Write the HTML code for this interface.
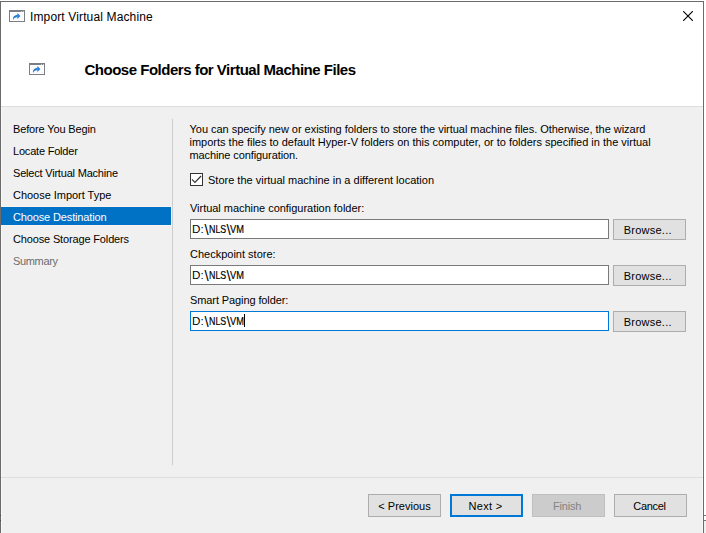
<!DOCTYPE html>
<html>
<head>
<meta charset="utf-8">
<title>Import Virtual Machine</title>
<style>
html,body{margin:0;padding:0;}
body{width:706px;height:533px;overflow:hidden;background:#fff;position:relative;font-family:"Liberation Sans",sans-serif;font-size:11px;color:#000;}
.abs{position:absolute;}
#bg{position:absolute;left:1px;top:107px;width:702px;height:440px;background:#f0f0f0;}
#bt{position:absolute;left:0;top:1px;width:704px;height:1px;background:#6b6b6b;}
#bl{position:absolute;left:0;top:1px;width:1px;height:540px;background:#6b6b6b;}
#br{position:absolute;left:703px;top:1px;width:1px;height:540px;background:#6b6b6b;}
#headline{position:absolute;left:1px;top:106px;width:702px;height:1px;background:#dfdcdf;}
.t{position:absolute;white-space:nowrap;line-height:13px;height:13px;}
#title{left:30px;top:9px;font-size:12px;line-height:16px;height:16px;letter-spacing:0.135px;}
#h1{left:84.5px;top:61px;font-size:15px;font-weight:bold;line-height:18px;height:18px;letter-spacing:-0.49px;}
.nav{left:13px;letter-spacing:-0.2px;}
#sel{position:absolute;left:1px;top:207px;width:170px;height:18px;background:#0072c6;}
#vsep{position:absolute;left:172px;top:119px;width:1px;height:346px;background:#cdcdcd;}
.tb{position:absolute;left:190px;width:417px;height:18px;border:1px solid #7a7a7a;background:#fff;}
.tb span{position:absolute;top:3px;line-height:13px;white-space:nowrap;transform-origin:0 50%;}
.tb span.bs{font-size:15px;top:3px;}
.btn{position:absolute;height:19px;width:71px;border:1px solid #adadad;background:#e1e1e1;text-align:center;line-height:21px;white-space:nowrap;}
.br{letter-spacing:0.25px;text-indent:-3.5px;}
.btn.big{height:21px;line-height:23px;}
#hsep{position:absolute;left:1px;top:477px;width:702px;height:1px;background:#dfdcdf;}
.ico{position:absolute;width:16px;height:12px;}
</style>
</head>
<body>
<div id="bg"></div>
<div id="headline"></div>
<div class="abs" style="left:1px;top:107px;width:1px;height:440px;background:#f8f8f8"></div><div class="abs" style="left:702px;top:107px;width:1px;height:440px;background:#f8f8f8"></div>
<div id="bt"></div><div id="bl"></div><div id="br"></div>
<div class="abs" style="left:0;top:515px;width:1px;height:1px;background:#444"></div><div class="abs" style="left:0;top:520px;width:1px;height:1px;background:#444"></div>
<div class="abs" style="left:704px;top:515px;width:2px;height:1px;background:#777"></div>
<div class="abs" style="left:704px;top:520px;width:2px;height:1px;background:#777"></div>
<div class="abs" style="left:704px;top:521px;width:2px;height:12px;background:#f0f0f0"></div>

<svg class="ico" style="left:9px;top:10px" viewBox="0 0 16 12"><rect x="0.5" y="0.5" width="15" height="11" fill="#fff" stroke="#7b7f83"/><rect x="0" y="0" width="16" height="2" fill="#7b7f83"/><rect x="2" y="3" width="12" height="7" fill="#fafafa"/><rect x="12" y="1" width="1" height="1" fill="#c9ccd0"/><rect x="14" y="1" width="1" height="1" fill="#c9ccd0"/><path d="M8.4 3.1 L11.3 6.05 L8.4 9 V7.35 C7.2 7.3 6.0 7.55 5.4 8 C4.95 8.4 4.7 9.1 4.5 9.9 C3.6 8.5 4.2 7 5.37 6.0 C6.2 5.3 7.2 4.9 8.4 4.8 Z" fill="#1d74cc"/><path d="M8.7 4.9 L10.2 6.05 L8.7 7.2 L7.2 6.3 Z" fill="#3b97ea"/></svg>
<svg class="ico" style="left:29px;top:63px" viewBox="0 0 16 12"><rect x="0.5" y="0.5" width="15" height="11" fill="#fff" stroke="#7b7f83"/><rect x="0" y="0" width="16" height="2" fill="#7b7f83"/><rect x="2" y="3" width="12" height="7" fill="#fafafa"/><rect x="12" y="1" width="1" height="1" fill="#c9ccd0"/><rect x="14" y="1" width="1" height="1" fill="#c9ccd0"/><path d="M8.4 3.1 L11.3 6.05 L8.4 9 V7.35 C7.2 7.3 6.0 7.55 5.4 8 C4.95 8.4 4.7 9.1 4.5 9.9 C3.6 8.5 4.2 7 5.37 6.0 C6.2 5.3 7.2 4.9 8.4 4.8 Z" fill="#1d74cc"/><path d="M8.7 4.9 L10.2 6.05 L8.7 7.2 L7.2 6.3 Z" fill="#3b97ea"/></svg>
<svg class="abs" style="left:683px;top:11px;width:10px;height:10px" viewBox="0 0 10 10"><path d="M0.6 0.6 L9.4 9.4 M9.4 0.6 L0.6 9.4" stroke="#000" stroke-width="1.15" stroke-linecap="square" fill="none"/></svg>

<div class="t" id="title">Import Virtual Machine</div>
<div class="t" id="h1">Choose Folders for Virtual Machine Files</div>

<div class="abs" style="left:1px;top:206px;width:171px;height:20px;background:#f7f3ef"></div>
<div id="sel"></div>
<div class="t nav" style="top:123px;letter-spacing:-0.14px">Before You Begin</div>
<div class="t nav" style="top:145px">Locate Folder</div>
<div class="t nav" style="top:167px">Select Virtual Machine</div>
<div class="t nav" style="top:189px;letter-spacing:-0.03px">Choose Import Type</div>
<div class="t nav" style="top:211px;color:#fff;letter-spacing:-0.14px">Choose Destination</div>
<div class="t nav" style="top:233px;letter-spacing:-0.15px">Choose Storage Folders</div>
<div class="t nav" style="top:255px;color:#6d6d6d;letter-spacing:-0.35px">Summary</div>
<div id="vsep"></div>

<div class="t" style="left:189.5px;top:123px;letter-spacing:-0.03px">You can specify new or existing folders to store the virtual machine files. Otherwise, the wizard</div>
<div class="t" style="left:189.5px;top:136px;letter-spacing:-0.005px">imports the files to default Hyper-V folders on this computer, or to folders specified in the virtual</div>
<div class="t" style="left:189.5px;top:149px;letter-spacing:-0.1px">machine configuration.</div>

<div class="abs" id="cb" style="left:190px;top:173px;width:11px;height:11px;border:1px solid #333;background:#fff;"></div>
<svg class="abs" style="left:190px;top:173px;width:13px;height:13px" viewBox="0 0 13 13"><path d="M2.0 6.4 L4.9 9.3 L11.1 3.0" stroke="#333" stroke-width="1.2" fill="none"/></svg>
<div class="t" style="left:208px;top:174px">Store the virtual machine in a different location</div>

<div class="t" style="left:190px;top:202px;letter-spacing:-0.03px">Virtual machine configuration folder:</div>
<div class="tb" style="top:219px"><span class="g" style="left:0.9px;transform:scaleX(1.055)">D:</span><span class="g bs" style="left:13.5px">\</span><span class="g" style="left:18px;transform:scaleX(0.804);-webkit-text-stroke:0.2px #000">NLS</span><span class="g bs" style="left:35.5px">\</span><span class="g" style="left:38.9px;transform:scaleX(0.844);-webkit-text-stroke:0.2px #000">VM</span></div>
<div class="btn br" style="left:613px;top:219px">Browse...</div>

<div class="t" style="left:190px;top:248px">Checkpoint store:</div>
<div class="tb" style="top:265px"><span class="g" style="left:0.9px;transform:scaleX(1.055)">D:</span><span class="g bs" style="left:13.5px">\</span><span class="g" style="left:18px;transform:scaleX(0.804);-webkit-text-stroke:0.2px #000">NLS</span><span class="g bs" style="left:35.5px">\</span><span class="g" style="left:38.9px;transform:scaleX(0.844);-webkit-text-stroke:0.2px #000">VM</span></div>
<div class="btn br" style="left:613px;top:265px">Browse...</div>

<div class="t" style="left:190px;top:294px;letter-spacing:-0.1px">Smart Paging folder:</div>
<div class="tb" style="top:311px;border-color:#0078d7"><span class="g" style="left:0.9px;transform:scaleX(1.055)">D:</span><span class="g bs" style="left:13.5px">\</span><span class="g" style="left:18px;transform:scaleX(0.804);-webkit-text-stroke:0.2px #000">NLS</span><span class="g bs" style="left:35.5px">\</span><span class="g" style="left:38.9px;transform:scaleX(0.844);-webkit-text-stroke:0.2px #000">VM</span></div>
<div class="abs" style="left:244px;top:314px;width:1px;height:13px;background:#000"></div>
<div class="btn br" style="left:613px;top:311px">Browse...</div>

<div id="hsep"></div>
<div class="btn big" style="left:368px;top:494px">&lt; Previous</div>
<div class="btn big" style="left:450px;top:494px;border-color:#0078d7;box-shadow:inset 0 0 0 1px #0078d7"><span style="letter-spacing:0.3px;margin-left:-2px">Next &gt;</span></div>
<div class="btn big" style="left:532px;top:494px;background:#cccccc;border-color:#bfbfbf;color:#838383;letter-spacing:-0.2px;text-indent:-2.7px">Finish</div>
<div class="btn big" style="left:614px;top:494px;letter-spacing:-0.3px;text-indent:-2px">Cancel</div>
</body>
</html>
